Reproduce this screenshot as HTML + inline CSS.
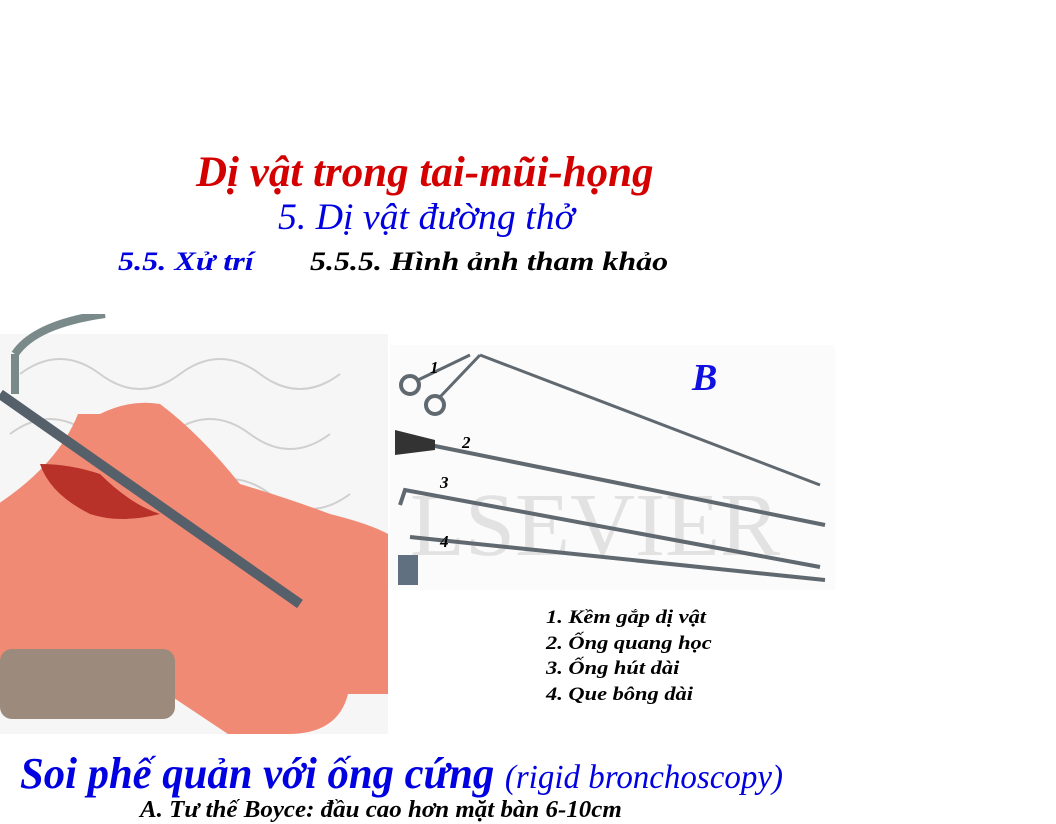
<!DOCTYPE html>
<html><head><meta charset="utf-8"><style>
body{margin:0;width:1056px;height:816px;background:#fff;position:relative;overflow:hidden;font-family:"Liberation Serif",serif}
.t{position:absolute;white-space:nowrap;font-weight:bold;font-style:italic;transform-origin:left top}
</style></head><body>
<div class="t" style="left:196px;top:148px;font-size:43px;color:#d40000">Dị vật trong tai-mũi-họng</div>
<div class="t" style="left:278px;top:196px;font-size:37px;color:#0000e0;font-weight:normal;transform:scaleX(1.02)">5. Dị vật đường thở</div>
<div class="t" style="left:118px;top:247px;font-size:26px;color:#0000e0;transform:scaleX(1.24)">5.5. Xử trí</div>
<div class="t" style="left:310px;top:247px;font-size:26px;color:#000;transform:scaleX(1.23)">5.5.5. Hình ảnh tham khảo</div>

<svg style="position:absolute;left:0;top:314px" width="390" height="420">
<rect x="0" y="20" width="388" height="400" fill="#f6f6f6"/>
<g stroke="#cfcfcf" fill="none" stroke-width="2">
<path d="M20 60 q40 -30 80 0 t80 0 t80 0 t80 0 M10 120 q40 -30 80 0 t80 0 t80 0 t80 0 M30 180 q40-30 80 0 t80 0 t80 0 t80 0 M0 240 q40-30 80 0 t80 0 t80 0 t80 0"/>
</g>
<path d="M100 100 q30-15 60 -10 q40 30 80 80 q50 15 90 30 q40 10 58 20 v160 h-40 q-10 40 -60 40 h-60 q-30-20 -60-40 q-20-30-60-30 h-110 v-160 q60-40 80-90 z" fill="#f08a74"/>
<path d="M40 150 q30 0 60 10 q30 30 60 40 q-40 10 -70 0 q-40-20 -50-50z" fill="#b8322a"/>
<rect x="0" y="335" width="175" height="70" rx="12" fill="#9c8a7c"/>
<path d="M0 80 L300 290" stroke="#55606a" stroke-width="10"/>
<path d="M15 40 L15 80 M15 40 q20-30 90-40" stroke="#7a8a8a" stroke-width="8" fill="none"/>
</svg>

<svg style="position:absolute;left:390px;top:345px" width="450" height="250">
<rect x="0" y="0" width="445" height="245" fill="#fbfbfb"/>
<text x="20" y="210" font-size="90" fill="#e2e2e2" font-family="Liberation Serif">LSEVIER</text>
<g stroke="#606870" fill="none">
<path d="M90 10 L430 140" stroke-width="3"/>
<circle cx="20" cy="40" r="9" stroke-width="4"/><circle cx="45" cy="60" r="9" stroke-width="4"/>
<path d="M28 35 L80 10 M50 52 L90 10" stroke-width="3"/>
<path d="M40 100 L435 180" stroke-width="4"/>
<path d="M10 160 L15 145 L430 222" stroke-width="4"/>
<path d="M20 192 L435 235" stroke-width="4"/>
</g>
<path d="M5 85 L45 95 L45 105 L5 110z" fill="#333"/>
<rect x="8" y="210" width="20" height="30" fill="#607080"/>
<text x="40" y="28" font-size="17" font-style="italic" font-weight="bold" fill="#000">1</text>
<text x="72" y="103" font-size="17" font-style="italic" font-weight="bold" fill="#000">2</text>
<text x="50" y="143" font-size="17" font-style="italic" font-weight="bold" fill="#000">3</text>
<text x="50" y="202" font-size="17" font-style="italic" font-weight="bold" fill="#000">4</text>
<text x="302" y="45" font-size="38" font-style="italic" font-weight="bold" fill="#1010e0">B</text>
</svg>

<div class="t" style="left:546px;top:605px;font-size:19px;line-height:25.5px;color:#000;transform:scaleX(1.18)">1. Kềm gắp dị vật<br>2. Ống quang học<br>3. Ống hút dài<br>4. Que bông dài</div>

<div class="t" style="left:20px;top:748px;font-size:44px;color:#0000e0;transform:scaleX(0.97)">Soi phế quản với ống cứng <span style="font-weight:normal;font-size:34px">(rigid bronchoscopy)</span></div>
<div class="t" style="left:140px;top:797px;font-size:24px;color:#000;transform:scaleX(1.04)">A. Tư thế Boyce: đầu cao hơn mặt bàn 6-10cm</div>
</body></html>
